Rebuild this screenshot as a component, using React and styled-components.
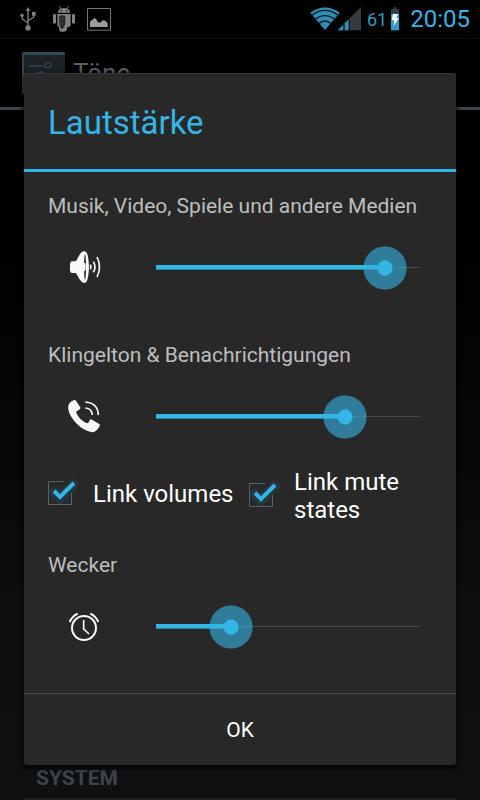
import { useState } from "react";
import styled, { createGlobalStyle } from "styled-components";

const GlobalStyle = createGlobalStyle`
  * {
    box-sizing: border-box;
  }

  body {
    margin: 0;
    background: #000;
    font-family: Roboto, "Noto Sans", sans-serif;
  }
`;

/* status bar icons */

const UsbIcon = () => (
  <svg width="16" height="24" viewBox="0 0 48 72" fill="#7f8284" stroke="#7f8284">
    <path d="M24 6v56M24 48L7 36V26M24 42l17-12V20" fill="none" strokeWidth="4" />
    <circle cx="24" cy="63" r="8" stroke="none" />
    <circle cx="6" cy="25" r="5" stroke="none" />
    <path d="M36 15h11v11H36zM24 0l7 12H17z" stroke="none" />
  </svg>
);

const AndroidIcon = () => (
  <svg width="24" height="26" viewBox="0 0 72 78" fill="#7f8284">
    <path d="M17 20q2-13 19-14 17 1 19 14z" />
    <path d="M22 1l7 9M50 1l-7 9" stroke="#7f8284" strokeWidth="3" />
    <circle cx="28" cy="14" r="2" fill="#000" />
    <circle cx="44" cy="14" r="2" fill="#000" />
    <rect x="3" y="24" width="9" height="29" rx="4" />
    <rect x="60" y="24" width="9" height="29" rx="4" />
    <path d="M16 24h40v32q0 6-6 7h-4q-1 13-10 14H26q-5-1-5-14-5-1-5-7z" />
    <path d="M20 30q10-4 20 0v20q-2 14-8 19-9-2-10-16z" fill="#26292b" />
    <path
      d="M24 34h12M22 40h14M24 46h12M24 52h10M25 58h9"
      stroke="#7f8284"
      strokeWidth="2"
      strokeDasharray="2 4"
    />
  </svg>
);

const PictureIcon = () => (
  <svg width="24" height="23" viewBox="0 0 72 69">
    <path d="M1.5 1.5h69v65h-69z" fill="none" stroke="#74787a" strokeWidth="3" />
    <path d="M9 57V42l5-6 5-2 3-5 6 5 4 7 5 3 6-3 4-4 8 1 3 4 4 2v13z" fill="#9a9c9d" />
  </svg>
);

const WifiIcon = () => (
  <svg width="30" height="24" viewBox="0 0 90 72">
    <clipPath id="wifiWedge">
      <path d="M0 17Q45-16 90 17L45 70z" />
    </clipPath>
    <g clipPath="url(#wifiWedge)">
      <path d="M0 17Q45-16 90 17L45 70z" fill="#2e8fb4" />
      <path
        d="M4 26q41-32 82 0M14 38q31-24 62 0M25 50q20-16 40 0"
        fill="none"
        stroke="#05161d"
        strokeWidth="4"
      />
    </g>
  </svg>
);

const SignalIcon = () => (
  <svg width="24" height="24" viewBox="0 0 72 72">
    <path d="M2 70L72 0v70z" fill="#353c40" />
    <path d="M2 70l17-17v17zM23 49l12-12v33H23z" fill="#2e8fb4" />
    <path d="M21 50v20M37 35v35" stroke="#0b1215" strokeWidth="3" />
  </svg>
);

const BatteryIcon = () => (
  <svg width="8" height="24" viewBox="0 0 24 72">
    <path d="M7 1h10v5h7v14H0V6h7z" fill="#353c40" />
    <path d="M0 20h24v50H0z" fill="#2e9cc7" />
    <path d="M6 21h15l-5 12h8L8 57l2-17H2z" fill="#fff" />
  </svg>
);

const SettingsIcon = () => (
  <svg width="43" height="42" viewBox="0 0 43 42">
    <path d="M0 2q0-2 2-2h39q2 0 2 2v40H0z" fill="#1d2325" />
    <path d="M0 2q0-2 2-2h39q2 0 2 2v1H0z" fill="#2b4a56" />
    <path d="M1 3v39" stroke="#39444a" strokeWidth="2" />
    <path d="M7 14h16M13 21h10" stroke="#3a4f58" strokeWidth="1" />
    <circle cx="26" cy="13" r="3" fill="none" stroke="#3a4f58" strokeWidth="1" />
    <path d="M16 21q3-4 6 0z" fill="#3a4f58" />
  </svg>
);

/* volume icons */

const SpeakerIcon = () => (
  <svg width="36" height="36" viewBox="0 0 108 108">
    <path
      d="M17 34h12C36 28 40 8 52 4q9-3 13 12c5 22 5 48 0 70q-4 15-13 12C40 94 36 75 29 69H17q-5-1-5-9V43q0-8 5-9z"
      fill="#fafafa"
    />
    <ellipse cx="57" cy="51" rx="3" ry="38" fill="#282828" />
    <ellipse cx="55" cy="51" rx="4" ry="13" fill="#fafafa" />
    <path
      d="M73 44q3 7 0 14M82 35q10 16 0 32M93 21q15 30 0 60"
      fill="none"
      stroke="#fafafa"
      strokeWidth="5"
    />
  </svg>
);

const PhoneIcon = () => (
  <svg width="36" height="36" viewBox="0 0 108 108">
    <path
      d="M9 14Q16 5 25 3q4 0 6 4l13 20q-2 5-14 11c4 14 18 30 36 35l7-12q2-1 5 1l22 13q3 3 1 6-7 14-17 18-12 3-30-8C34 79 12 55 7 32q-2-11 2-18z"
      fill="#fafafa"
    />
    <path d="M58 9q38 3 39 39M58 27q20 2 21 21" fill="none" stroke="#fafafa" strokeWidth="5" />
  </svg>
);

const AlarmIcon = () => (
  <svg width="36" height="36" viewBox="0 0 108 108" fill="none" stroke="#fafafa">
    <circle cx="54" cy="57" r="36" strokeWidth="6" />
    <path d="M53 33v27l16 15" strokeWidth="5" />
    <path d="M11 39Q18 22 35 14M73 14q17 8 24 25" strokeWidth="6" />
  </svg>
);

const Tick = () => (
  <TickSvg width="36" height="36" viewBox="0 0 36 36">
    <path d="M20 5.500H4.500V28.500H27.500V17" stroke="#5b6265" strokeWidth="1" />
    <g className="tick">
      <path d="M10 16l6 6L30 8" stroke="#33b5e5" strokeWidth="10" opacity="0.1" strokeLinecap="round" />
      <path d="M10 15l6 6L30 7" stroke="#33b5e5" strokeWidth="4" />
    </g>
  </TickSvg>
);

function VolumeSlider({ id, label, icon, max, initial }) {
  const [value, setValue] = useState(initial);

  return (
    <Section>
      <Label htmlFor={id}>{label}</Label>
      <SliderRow>
        <IconBox>{icon}</IconBox>
        <Range
          id={id}
          type="range"
          min="0"
          max={max}
          value={value}
          onChange={(e) => setValue(Number(e.target.value))}
          style={{ "--level": value / max }}
        />
      </SliderRow>
    </Section>
  );
}

function LinkOption({ children }) {
  const [checked, setChecked] = useState(true);

  return (
    <Option>
      <CheckBox>
        <input type="checkbox" checked={checked} onChange={() => setChecked(!checked)} />
        <Tick />
      </CheckBox>
      <span>{children}</span>
    </Option>
  );
}

function App() {
  return (
    <>
      <GlobalStyle />
      <Screen>
        <StatusBar>
          <Notifications>
            <UsbIcon />
            <AndroidIcon />
            <PictureIcon />
          </Notifications>
          <Signals>
            <WifiIcon />
            <SignalIcon />
          </Signals>
          <Percent>61</Percent>
          <BatteryIcon />
          <Clock>20:05</Clock>
        </StatusBar>
        <ActionBar>
          <SettingsIcon />
          <PageTitle>Töne</PageTitle>
        </ActionBar>
        <SettingsList>
          <Category>SYSTEM</Category>
        </SettingsList>
        <Overlay>
          <Dialog role="dialog" aria-labelledby="dialogTitle">
            <DialogTitle id="dialogTitle">Lautstärke</DialogTitle>
            <DialogBody>
              <VolumeSlider
                id="media"
                label="Musik, Video, Spiele und andere Medien"
                icon={<SpeakerIcon />}
                max={15}
                initial={13}
              />
              <RingGroup>
                <VolumeSlider
                  id="ring"
                  label="Klingelton & Benachrichtigungen"
                  icon={<PhoneIcon />}
                  max={7}
                  initial={5}
                />
                <Options>
                  <LinkOption>Link volumes</LinkOption>
                  <LinkOption>Link mute states</LinkOption>
                </Options>
                <VolumeSlider
                  id="alarm"
                  label="Wecker"
                  icon={<AlarmIcon />}
                  max={7}
                  initial={2}
                />
              </RingGroup>
            </DialogBody>
            <OkButton type="button">OK</OkButton>
          </Dialog>
        </Overlay>
      </Screen>
    </>
  );
}

const Screen = styled.div`
  position: relative;
  display: flex;
  flex-direction: column;
  min-height: 100vh;
  background: #000;
`;

const StatusBar = styled.header`
  display: flex;
  align-items: center;
  height: 39px;
  padding: 0 10px 0 20px;
  border-bottom: 1px solid #0b0b0b;
  color: #33b5e5;
`;

const Notifications = styled.div`
  display: flex;
  flex: 1;
  align-items: center;
  gap: 16px;

  svg:nth-child(2) {
    margin-right: -5px;
  }
`;

const Signals = styled.div`
  display: flex;

  svg + svg {
    margin-left: -3px;
  }
`;

const Percent = styled.span`
  margin: 0 4px 0 6px;
  font-size: 18px;
  color: #2e9cc7;
`;

const Clock = styled.span`
  margin-left: 11px;
  font-size: 24px;
`;

const ActionBar = styled.div`
  display: flex;
  align-items: center;
  gap: 8px;
  height: 71px;
  padding: 0 22px;
  border-bottom: 3px solid #3a444b;
`;

const PageTitle = styled.h1`
  margin: 0;
  font-size: 26px;
  font-weight: 400;
  color: #5a6164;
`;

const SettingsList = styled.main`
  display: flex;
  flex: 1;
  flex-direction: column;
  justify-content: flex-end;
  padding: 0 24px;
  background: linear-gradient(#000 0, #000 15%, #050608 45%, #0d0f11 75%, #0e1012 100%);
`;

const Category = styled.h2`
  margin: 0;
  padding: 0 12px 8px;
  border-bottom: 2px solid #1c1e20;
  font-size: 21px;
  line-height: 24px;
  font-weight: 700;
  color: #3b454a;
`;

/* dialog */

const Overlay = styled.div`
  position: absolute;
  inset: 38px 0 0;
  display: flex;
  align-items: center;
  padding: 0 24px;
`;

const Dialog = styled.section`
  flex: 1;
  overflow: hidden;
  border-radius: 3px;
  background: #282828;
  box-shadow: 0 2px 6px #000, inset 0 1px #34383a;
`;

const DialogTitle = styled.h2`
  margin: 0;
  padding: 30px 24px 26px;
  border-bottom: 3px solid #33b5e5;
  font-size: 33px;
  line-height: 40px;
  font-weight: 400;
  color: #33b5e5;
`;

const DialogBody = styled.div`
  display: flex;
  flex-direction: column;
  gap: 49px;
  padding: 20px 6px 42px 24px;
`;

const RingGroup = styled.div`
  display: flex;
  flex-direction: column;
  gap: 27px;
`;

const Section = styled.div`
  display: flex;
  flex-direction: column;
  gap: 24px;
`;

const Label = styled.label`
  font-size: 21px;
  line-height: 28px;
  color: #bebebe;
`;

const SliderRow = styled.div`
  display: flex;
  align-items: center;
  gap: 14px;
  padding-right: 8px;
`;

const IconBox = styled.div`
  display: flex;
  justify-content: center;
  width: 72px;
`;

const Range = styled.input`
  flex: 1;
  min-width: 0;
  height: 48px;
  margin: 0;
  appearance: none;
  cursor: pointer;
  outline: none;
  background-color: transparent;
  background-image: linear-gradient(#33b5e5 80%, #2b7e9d 80%), linear-gradient(#434a4d, #434a4d);
  background-repeat: no-repeat;
  background-position: 22px 21px, 22px 23px;
  background-size: calc((100% - 44px) * var(--level)) 5px, calc(100% - 44px) 1px;

  &::-webkit-slider-thumb {
    appearance: none;
    width: 44px;
    height: 44px;
    border-radius: 50%;
    background: radial-gradient(
      circle,
      #33b5e5 7px,
      rgba(51, 181, 229, 0.6) 8px,
      rgba(51, 181, 229, 0.6) 21px,
      rgba(51, 181, 229, 0.1) 22px
    );
  }
`;

const Options = styled.div`
  display: grid;
  grid-template-columns: 1fr 1fr;
  align-items: start;
`;

const Option = styled.label`
  display: flex;
  align-items: center;
  gap: 21px;
  min-height: 52px;
  font-size: 24px;
  line-height: 28px;
  color: #fff;
  cursor: pointer;
`;

const CheckBox = styled.span`
  position: relative;
  flex: none;
  width: 24px;
  height: 24px;
  margin-bottom: 3px;

  input {
    display: block;
    width: 24px;
    height: 24px;
    margin: 0;
    appearance: none;
    background: #252b2d;
  }

  input:not(:checked) + svg .tick {
    display: none;
  }
`;

const TickSvg = styled.svg`
  position: absolute;
  top: -5px;
  left: -4px;
  fill: none;
  pointer-events: none;
`;

const OkButton = styled.button`
  display: block;
  width: 100%;
  height: 72px;
  border: 0;
  border-top: 1px solid #434a4c;
  background: none;
  font-family: inherit;
  font-size: 21px;
  color: #fff;
  cursor: pointer;
`;

export default App;
